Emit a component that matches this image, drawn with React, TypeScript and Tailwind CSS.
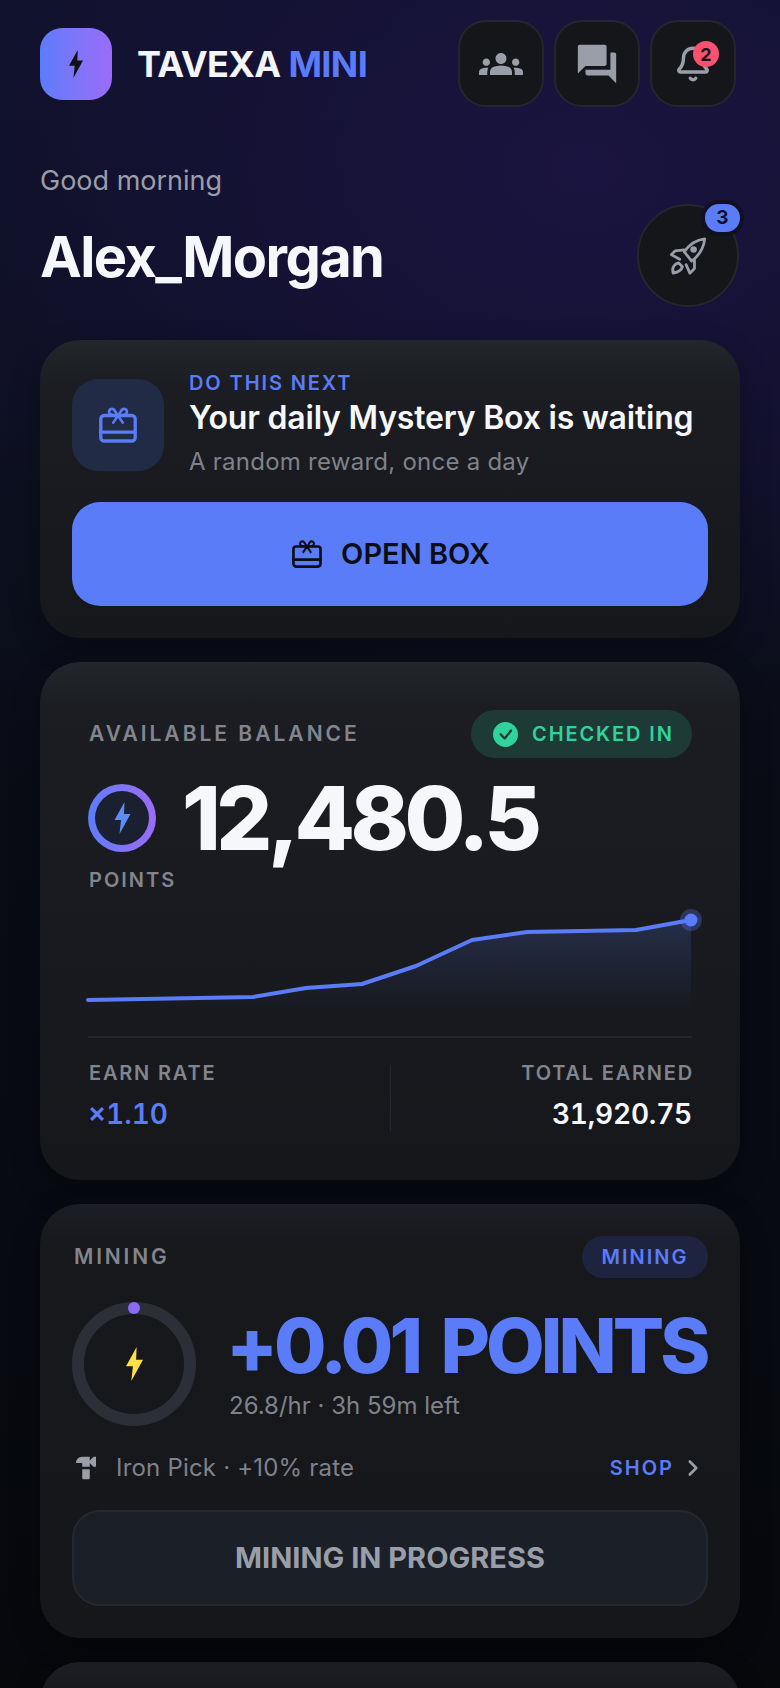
import { Bell, ChevronRight } from 'lucide-react';
import { MdForum, MdGroups, MdHardware } from 'react-icons/md';
import { BsCheckCircleFill } from 'react-icons/bs';

const chartLine = '0,90 165,87 218,78 274,74 328,56 384,30 439,22 548,20 603,10';

const GiftIcon = ({ className }: { className?: string }) => (
  <svg viewBox="0 0 32 30" fill="none" stroke="currentColor" strokeWidth={2.8} strokeLinejoin="round" strokeLinecap="round" className={className}>
    <rect x="1.5" y="7" width="29" height="21.5" rx="3" />
    <path d="M1.5 21h29" />
    <path d="M16 7c-1.500-1.500-2-3-3-4.500-1.500-2-4.500-1-4.500 1.500 0 2 2 3 7.500 3zm0 0c1.500-1.500 2-3 3-4.500 1.500-2 4.500-1 4.500 1.500 0 2-2 3-7.500 3z" strokeWidth={2.2} />
    <path d="M16 7l-4 6M16 7l4 6" strokeWidth={2.2} />
  </svg>
);

const RocketIcon = ({ className }: { className?: string }) => (
  <svg viewBox="-2 -2 40 41" fill="none" stroke="currentColor" strokeWidth={3} strokeLinejoin="round" strokeLinecap="round" className={className}>
    <path d="M36 0C28 1 20 5 14 14l8 10c8-6 13-15 14-24z" />
    <path d="M14 12 4 13l-4 4 9 5" />
    <path d="M25 22l0 10-5 5-4-9" />
    <path d="M2 37c-2-7 2-10 6-11l4 4c-1 4-5 6-10 7z" />
    <circle cx="24" cy="11.500" r="3.500" fill="currentColor" stroke="none" />
  </svg>
);

const Bolt = ({ className }: { className?: string }) => (
  <svg viewBox="0 0 16 32" fill="currentColor" className={className}>
    <path d="M10 0 0 18h6.500L5 32 16 12H9.500z" />
  </svg>
);

const IconButton = ({ children }: { children: React.ReactNode }) => (
  <div className="relative flex h-[87px] w-[86px] items-center justify-center rounded-[28px] border-2 border-[#24262d] bg-[#14161a] text-[#9a9ea9]">
    {children}
  </div>
);

const Card = ({ children, className }: { children?: React.ReactNode; className?: string }) => (
  <div className={`shrink-0 rounded-[40px] shadow-[0_10px_30px_rgba(0,0,0,0.3)] ${className ?? ''}`}>
    {children}
  </div>
);

export default function App() {
  return (
    <div
      className="flex h-[1688px] w-full flex-col overflow-hidden bg-[radial-gradient(ellipse_700px_520px_at_75%_170px,#1a1440_0%,rgba(24,18,60,0.6)_50%,rgba(16,18,42,0)_100%),linear-gradient(180deg,#10122b_0%,#0e1022_25%,#090c15_48%,#06080c_100%)] px-10 pt-5 font-['Inter',sans-serif]"
    >
      {/* Top bar */}
      <header className="flex h-[87px] shrink-0 items-center justify-between pr-[4px]">
        <div className="flex items-center gap-[25px]">
          <div className="flex h-[72px] w-[72px] items-center justify-center rounded-[22px] bg-gradient-to-r from-[#5b7cfa] to-[#9a6cf8] text-[#101218]">
            <Bolt className="h-[28px] w-[14px]" />
          </div>
          <div className="text-[36px] font-bold tracking-[-0.6px] text-[#f4f5f9]">
            TAVEXA <span className="text-[#5b7cf8]">MINI</span>
          </div>
        </div>
        <div className="flex gap-[10px]">
          <IconButton>
            <MdGroups size={44} />
          </IconButton>
          <IconButton>
            <MdForum size={46} />
          </IconButton>
          <IconButton>
            <Bell size={38} strokeWidth={2.2} />
            <span className="absolute right-[15px] top-[19px] flex h-[26px] w-[26px] items-center justify-center rounded-full bg-[#f9516f] text-[18px] font-bold text-[#14161a]">
              2
            </span>
          </IconButton>
        </div>
      </header>

      {/* Greeting */}
      <section className="mt-[53px] flex h-[147px] shrink-0 items-end justify-between">
        <div className="self-start">
          <div className="flex h-[42px] items-center text-[27px] text-[#9a9ea9]">Good morning</div>
          <div className="mt-[21px] text-[56px] font-bold leading-[68px] tracking-[-1.6px] text-[#f6f7fb]">Alex_Morgan</div>
        </div>
        <div className="relative mr-px flex h-[103px] w-[102px] items-center justify-center rounded-full border-2 border-[#24262d] bg-[#14161a] text-[#9a9ea9]">
          <RocketIcon className="h-[38px] w-[38px]" />
          <span className="absolute -right-[7px] -top-[6px] flex h-[36px] w-[43px] items-center justify-center rounded-full border-[4px] border-[#0f1020] bg-[#5b7cf8] text-[19px] font-bold text-[#10122a]">
            3
          </span>
        </div>
      </section>

      {/* Next action */}
      <Card className="mt-[33px] bg-[linear-gradient(180deg,#23262b_0px,#1b1d22_44px,#15171b_100%)] px-8 pb-8 pt-7">
        <div className="flex items-center gap-[25px]">
          <div className="mt-1 flex h-[92px] w-[92px] items-center justify-center rounded-[26px] bg-[#222b45] text-[#5b7cf8]">
            <GiftIcon className="h-[36px] w-[38px]" />
          </div>
          <div>
            <div className="text-[20px] font-semibold leading-[30px] tracking-[1.9px] text-[#5b7cf8]">DO THIS NEXT</div>
            <div className="text-[32px] font-semibold leading-[40px] tracking-[-0.2px] text-[#f6f7fb]">Your daily Mystery Box is waiting</div>
            <div className="mt-2 text-[24px] leading-[32px] tracking-[0.25px] text-[#7f828b]">A random reward, once a day</div>
          </div>
        </div>
        <button className="mt-6 flex h-[104px] w-full items-center justify-center gap-[19px] rounded-[28px] bg-[#5b7cf8] pl-[2px] text-[29px] font-semibold text-[#0c0e16]">
          <GiftIcon className="h-[28px] w-[30px]" />
          OPEN BOX
        </button>
      </Card>

      {/* Balance */}
      <Card className="mt-6 bg-[linear-gradient(180deg,#23262b_0px,#1b1d22_44px,#15171b_100%)] px-12 pb-[49px] pt-12">
        <div className="flex items-center justify-between">
          <div className="pl-px text-[21px] font-semibold tracking-[3px] text-[#82858e]">AVAILABLE BALANCE</div>
          <div className="flex h-[48px] w-[221px] items-center gap-[14px] rounded-full bg-[#1d3a36] pl-[22px] text-[20px] font-semibold tracking-[1.9px] text-[#31d39c]">
            <BsCheckCircleFill size={25} />
            CHECKED IN
          </div>
        </div>
        <div className="mt-[26px] flex items-center gap-[26px]">
          <div className="flex h-[68px] w-[68px] items-center justify-center rounded-full bg-gradient-to-r from-[#5b7cfa] to-[#9a6cf8] p-[7px]">
            <div className="flex h-full w-full items-center justify-center rounded-full bg-[#1a2030] text-[#5b8cfa]">
              <Bolt className="h-[32px] w-[17px]" />
            </div>
          </div>
          <div className="text-[88px] font-extrabold leading-[68px] tracking-[-4.5px] text-[#f6f7fb]">12,480.5</div>
        </div>
        <div className="mt-4 pl-px text-[20px] font-semibold leading-[24px] tracking-[2px] text-[#82858e]">POINTS</div>
        <svg viewBox="0 0 604 126" className="mt-[18px] block h-[126px] w-full overflow-visible">
          <defs>
            <linearGradient id="balanceFill" x1="0" y1="0" x2="0" y2="1">
              <stop offset="0%" stopColor="#5b7cf8" stopOpacity="0.2" />
              <stop offset="100%" stopColor="#5b7cf8" stopOpacity="0" />
            </linearGradient>
          </defs>
          <polygon points={`${chartLine} 603,100 0,100`} fill="url(#balanceFill)" />
          <polyline points={chartLine} fill="none" stroke="#5b7cf8" strokeWidth={4} strokeLinejoin="round" strokeLinecap="round" />
          <circle cx="603" cy="10" r="11" fill="#5b7cf8" fillOpacity="0.3" />
          <circle cx="603" cy="10" r="6.500" fill="#5b7cf8" />
        </svg>
        <div className="flex border-t-2 border-[#24262c] pt-[27px]">
          <div className="flex-1">
            <div className="pl-px text-[20px] font-semibold leading-[16px] tracking-[1.8px] text-[#82858e]">EARN RATE</div>
            <div className="mt-[16px] text-[28px] font-semibold tabular-nums leading-[34px] text-[#5b7cf8]">×1.10</div>
          </div>
          <div className="w-px bg-[#26282e]" />
          <div className="flex-1 text-right">
            <div className="-mr-[2px] text-[20px] font-semibold leading-[16px] tracking-[1.8px] text-[#82858e]">TOTAL EARNED</div>
            <div className="mt-[16px] text-[28px] font-semibold tabular-nums leading-[34px] tracking-[-0.2px] text-[#f6f7fb]">31,920.75</div>
          </div>
        </div>
      </Card>

      {/* Mining */}
      <Card className="mt-6 bg-[linear-gradient(180deg,#1c1e23_0px,#16181c_44px,#15171b_100%)] px-8 pb-8 pt-8">
        <div className="flex items-center justify-between">
          <div className="pl-0.5 text-[21px] font-semibold tracking-[2.8px] text-[#82858e]">MINING</div>
          <div className="flex h-[42px] w-[126px] items-center justify-center rounded-full bg-[#1e2440] text-[20px] font-semibold tracking-[2px] text-[#5b7cf8]">
            MINING
          </div>
        </div>
        <div className="mt-6 flex items-center gap-[33px]">
          <div className="relative flex h-[124px] w-[124px] shrink-0 items-center justify-center rounded-full border-[12px] border-[#2d2f38] text-[#fde047]">
            <Bolt className="h-[34px] w-[19px]" />
            <span className="absolute -top-[12px] left-[44px] h-[12px] w-[12px] rounded-full bg-[#8b6cf8]" />
          </div>
          <div>
            <div className="-ml-[3px] -mt-[2px] whitespace-nowrap text-[76px] font-extrabold leading-[80px] tracking-[-4px] [word-spacing:9px] text-[#5b7cf8]">+0.01 POINTS</div>
            <div className="mt-[5px] text-[24px] leading-[32px] text-[#7f828b]">26.8/hr · 3h 59m left</div>
          </div>
        </div>
        <div className="mt-[26px] flex h-[32px] items-center justify-between pr-[8px]">
          <div className="flex items-center gap-[15px] text-[24px] tracking-[0.2px] text-[#7f828b]">
            <MdHardware size={30} className="-ml-[1px] text-[#9a9ea9]" />
            Iron Pick · +10% rate
          </div>
          <div className="flex items-center gap-[6px] text-[20px] font-semibold tracking-[2px] text-[#5b7cf8]">
            SHOP
            <ChevronRight size={26} strokeWidth={2.4} className="-mr-[6px] text-[#9a9ea9]" />
          </div>
        </div>
        <div className="mt-[26px] flex h-[96px] items-center justify-center rounded-[28px] border-2 border-[#26282f] bg-[#1b1f28] text-[29px] font-bold text-[#9a9ea9]">
          MINING IN PROGRESS
        </div>
      </Card>

      {/* Next card, cut off by the fold */}
      <Card className="mt-6 h-[200px] bg-[linear-gradient(180deg,#1c1e23_0px,#16181c_44px,#15171b_100%)]" />
    </div>
  );
}
